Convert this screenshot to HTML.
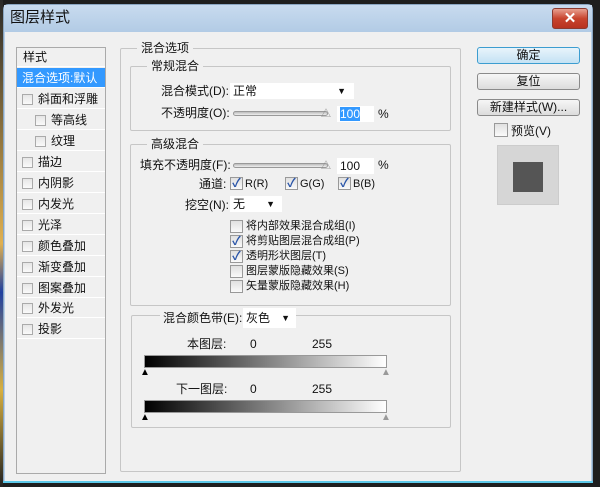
<!DOCTYPE html>
<html><head><meta charset="utf-8"><style>
*{margin:0;padding:0;box-sizing:border-box}
body{width:600px;height:487px;background:#1e1e1e;position:relative;overflow:hidden;font-family:"Liberation Sans","Noto Sans CJK SC",sans-serif;font-size:12px;line-height:14px;color:#111}
.a{position:absolute}
.win{left:3px;top:4px;width:590px;height:479px;background:#b8cfe6;border:1px solid #8aa6c2;border-radius:5px 5px 0 0}
.title{left:4px;top:5px;width:588px;height:27px;background:linear-gradient(#c8dbef,#b2cbe5)}
.client{left:5px;top:32px;width:586px;height:450px;background:#f0f0f0}
.grp{border:1px solid #c6c6c6;border-radius:2px}
.lg{background:#f0f0f0;padding:0 4px;font-size:12px;white-space:nowrap}
.btn{border:1px solid #8a8a8a;border-radius:3px;background:linear-gradient(#f6f6f6,#dcdcdc);text-align:center;font-size:12px;line-height:15px}
.cb{width:11px;height:11px;border:1px solid #aaa;background:linear-gradient(#e6e6e6,#fafafa)}
.cb2{width:13px;height:13px;border:1px solid #999;background:linear-gradient(#e0e0e0,#fafafa);font-size:12px;line-height:11px;color:#2a55a8;text-align:center;font-weight:bold}
.row{left:17px;width:88px;height:20px;border-bottom:1px solid #fff;line-height:20px}
.slider{height:5px;border:1px solid #999;border-radius:3px;background:linear-gradient(#bbb,#eee)}
.inp{background:#fff;height:16px;line-height:16px;padding-left:3px}
.grad{height:13px;border:1px solid #999;background:linear-gradient(to right,#000,#fff)}
</style></head><body>
<div class="a" style="left:0;top:0;width:3px;height:487px;background:linear-gradient(#2a2a2a,#e0b050 50%,#2040a0 60%,#d8b040 80%,#222)"></div>
<div class="a win"></div>
<div class="a title"></div>
<div class="a" style="left:10px;top:10px;font-size:15px;line-height:16px;color:#111">图层样式</div>
<div class="a" style="left:552px;top:8px;width:36px;height:21px;border:1px solid #8b3a30;border-radius:3px;background:linear-gradient(#e8a090,#c8442e 50%,#b83220);color:#fff;text-align:center;font-weight:bold;font-size:15px;line-height:19px">✕</div>
<div class="a client"></div>
<div class="a" style="left:3px;top:481px;width:590px;height:2px;background:#5cc8e8"></div>

<!-- left list -->
<div class="a" style="left:16px;top:47px;width:90px;height:427px;border:1px solid #aaa;background:#f0f0f0"></div>
<div class="a row" style="top:47px;padding-left:6px">样式</div>
<div class="a row" style="top:68px;background:#3399ff;color:#fff;padding-left:5px">混合选项:默认</div>
<div class="a row" style="top:89px"><span class="a cb" style="left:5px;top:5px"></span><span class="a" style="left:21px">斜面和浮雕</span></div>
<div class="a row" style="top:110px"><span class="a cb" style="left:18px;top:5px"></span><span class="a" style="left:34px">等高线</span></div>
<div class="a row" style="top:131px"><span class="a cb" style="left:18px;top:5px"></span><span class="a" style="left:34px">纹理</span></div>
<div class="a row" style="top:152px"><span class="a cb" style="left:5px;top:5px"></span><span class="a" style="left:21px">描边</span></div>
<div class="a row" style="top:173px"><span class="a cb" style="left:5px;top:5px"></span><span class="a" style="left:21px">内阴影</span></div>
<div class="a row" style="top:194px"><span class="a cb" style="left:5px;top:5px"></span><span class="a" style="left:21px">内发光</span></div>
<div class="a row" style="top:215px"><span class="a cb" style="left:5px;top:5px"></span><span class="a" style="left:21px">光泽</span></div>
<div class="a row" style="top:236px"><span class="a cb" style="left:5px;top:5px"></span><span class="a" style="left:21px">颜色叠加</span></div>
<div class="a row" style="top:257px"><span class="a cb" style="left:5px;top:5px"></span><span class="a" style="left:21px">渐变叠加</span></div>
<div class="a row" style="top:278px"><span class="a cb" style="left:5px;top:5px"></span><span class="a" style="left:21px">图案叠加</span></div>
<div class="a row" style="top:298px"><span class="a cb" style="left:5px;top:5px"></span><span class="a" style="left:21px">外发光</span></div>
<div class="a row" style="top:319px"><span class="a cb" style="left:5px;top:5px"></span><span class="a" style="left:21px">投影</span></div>

<!-- main group -->
<div class="a grp" style="left:120px;top:48px;width:341px;height:424px"></div>
<div class="a lg" style="left:137px;top:41px">混合选项</div>

<div class="a grp" style="left:130px;top:66px;width:321px;height:65px"></div>
<div class="a lg" style="left:147px;top:59px">常规混合</div>
<div class="a" style="left:161px;top:84px">混合模式(D):</div>
<div class="a inp" style="left:230px;top:83px;width:124px">正常<span class="a" style="right:8px;top:0;font-size:9px">▼</span></div>
<div class="a" style="left:161px;top:106px">不透明度(O):</div>
<div class="a slider" style="left:233px;top:111px;width:95px"></div>
<div class="a" style="left:321px;top:108px;font-size:10px;color:#888">△</div>
<div class="a inp" style="left:337px;top:106px;width:37px"><span style="background:#3399ff;color:#fff">100</span></div>
<div class="a" style="left:378px;top:107px">%</div>

<div class="a grp" style="left:130px;top:144px;width:321px;height:162px"></div>
<div class="a lg" style="left:147px;top:137px">高级混合</div>
<div class="a" style="left:140px;top:158px">填充不透明度(F):</div>
<div class="a slider" style="left:233px;top:163px;width:95px"></div>
<div class="a" style="left:321px;top:160px;font-size:10px;color:#888">△</div>
<div class="a inp" style="left:337px;top:158px;width:37px">100</div>
<div class="a" style="left:378px;top:158px">%</div>
<div class="a" style="left:199px;top:177px">通道:</div>
<div class="a cb2" style="left:230px;top:177px">✓</div><div class="a" style="left:245px;top:177px;font-size:11px">R(R)</div>
<div class="a cb2" style="left:285px;top:177px">✓</div><div class="a" style="left:300px;top:177px;font-size:11px">G(G)</div>
<div class="a cb2" style="left:338px;top:177px">✓</div><div class="a" style="left:353px;top:177px;font-size:11px">B(B)</div>
<div class="a" style="left:185px;top:198px">挖空(N):</div>
<div class="a inp" style="left:230px;top:196px;width:52px">无<span class="a" style="right:7px;top:0;font-size:9px">▼</span></div>
<div class="a cb2" style="left:230px;top:220px"></div><div class="a" style="left:246px;top:219px;font-size:11px">将内部效果混合成组(I)</div>
<div class="a cb2" style="left:230px;top:235px">✓</div><div class="a" style="left:246px;top:234px;font-size:11px">将剪贴图层混合成组(P)</div>
<div class="a cb2" style="left:230px;top:250px">✓</div><div class="a" style="left:246px;top:249px;font-size:11px">透明形状图层(T)</div>
<div class="a cb2" style="left:230px;top:265px"></div><div class="a" style="left:246px;top:264px;font-size:11px">图层蒙版隐藏效果(S)</div>
<div class="a cb2" style="left:230px;top:280px"></div><div class="a" style="left:246px;top:279px;font-size:11px">矢量蒙版隐藏效果(H)</div>

<div class="a grp" style="left:131px;top:315px;width:320px;height:113px"></div>
<div class="a lg" style="left:160px;top:311px;padding:0 3px">混合颜色带(E):</div>
<div class="a inp" style="left:243px;top:308px;width:53px;height:20px;line-height:20px">灰色<span class="a" style="right:6px;top:0;font-size:9px">▼</span></div>
<div class="a" style="left:187px;top:337px">本图层:</div>
<div class="a" style="left:250px;top:337px">0</div>
<div class="a" style="left:312px;top:337px">255</div>
<div class="a grad" style="left:144px;top:355px;width:243px"></div>
<div class="a" style="left:140px;top:366px;font-size:10px;color:#000">▲</div>
<div class="a" style="left:381px;top:366px;font-size:10px;color:#999">▲</div>
<div class="a" style="left:176px;top:382px">下一图层:</div>
<div class="a" style="left:250px;top:382px">0</div>
<div class="a" style="left:312px;top:382px">255</div>
<div class="a grad" style="left:144px;top:400px;width:243px"></div>
<div class="a" style="left:140px;top:411px;font-size:10px;color:#000">▲</div>
<div class="a" style="left:381px;top:411px;font-size:10px;color:#999">▲</div>

<!-- right -->
<div class="a btn" style="left:477px;top:47px;width:103px;height:17px;border-color:#3c9dd0;background:linear-gradient(#e8f4fb,#c4e2f4)">确定</div>
<div class="a btn" style="left:477px;top:73px;width:103px;height:17px">复位</div>
<div class="a btn" style="left:477px;top:99px;width:103px;height:17px">新建样式(W)...</div>
<div class="a cb2" style="left:494px;top:123px;width:14px;height:14px"></div>
<div class="a" style="left:511px;top:124px">预览(V)</div>
<div class="a" style="left:497px;top:145px;width:62px;height:60px;background:#d6d6d6;border:1px solid #ccc"></div>
<div class="a" style="left:513px;top:162px;width:30px;height:30px;background:#555"></div>
</body></html>
